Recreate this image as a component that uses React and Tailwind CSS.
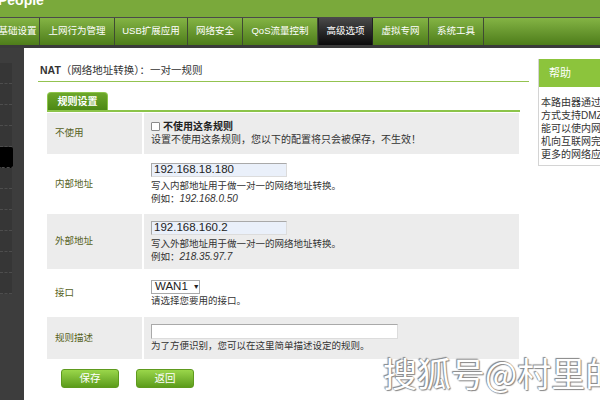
import React from "react";

const tabs = [
  { label: "基础设置", w: "w-[44px]" },
  { label: "上网行为管理", w: "w-[75px]" },
  { label: "USB扩展应用", w: "w-[73px]" },
  { label: "网络安全", w: "w-[55px]" },
  { label: "QoS流量控制", w: "w-[75px]" },
  { label: "高级选项", w: "w-[55px]", active: true },
  { label: "虚拟专网", w: "w-[56px]" },
  { label: "系统工具", w: "w-[55px]" },
];

const helpLines = [
  "本路由器通过一对一NAT",
  "方式支持DMZ主机，该功",
  "能可以使内网的一台主",
  "机向互联网完全暴露，",
  "更多的网络应用。",
];

const Row = ({ label, gray, h, children }) => (
  <div className={`flex ${h}`}>
    <div
      className={`w-[95px] shrink-0 flex items-center pl-[8px] text-[9.5px] text-[#56621c] ${
        gray ? "bg-[#ececec]" : "bg-white"
      }`}
    >
      {label}
    </div>
    <div className="w-[2px] shrink-0 bg-white" />
    <div
      className={`flex-1 flex flex-col justify-center pl-[7px] ${
        gray ? "bg-[#ececec]" : "bg-white"
      }`}
    >
      {children}
    </div>
  </div>
);

const TextBox = ({ value, w = "w-[136px]" }) => (
  <div
    className={`${w} h-[14px] bg-[#eaf0fa] border border-[#a9a9a9] border-r-[#dcdcdc] border-b-[#dcdcdc] flex items-center pl-[2px] text-[11.5px] leading-none text-[#222] font-['Liberation_Sans']`}
  >
    {value}
  </div>
);

const Hint = ({ children }) => (
  <div className="text-[9.5px] leading-[13px] text-[#333]">{children}</div>
);

const Example = ({ value }) => (
  <div className="text-[9.5px] leading-[13px] text-[#333]">
    例如：<span className="italic font-['Liberation_Sans'] text-[10px]">{value}</span>
  </div>
);

const GreenButton = ({ children }) => (
  <button className="w-[58px] h-[19px] rounded-[3px] border border-[#5e9a1e] bg-gradient-to-b from-[#9ad64a] to-[#5c9c1a] text-white text-[10.5px] leading-none">
    {children}
  </button>
);

export default function App() {
  return (
    <div className="relative w-[600px] h-[400px] overflow-hidden bg-white font-['Liberation_Sans','Noto_Sans_CJK_SC',sans-serif]">
      {/* header */}
      <div className="h-[17px] bg-[#7aa93b] relative overflow-hidden">
        <div className="absolute left-[-2px] top-[-10px] text-white text-[14px] font-bold">People</div>
      </div>

      {/* nav */}
      <div className="h-[28px] flex border-t border-[#4a4a4a] bg-gradient-to-b from-[#84b444] to-[#4e7d1a] -ml-[4px]">
        {tabs.map((t) => (
          <div
            key={t.label}
            className={`${t.w} shrink-0 flex items-center justify-center whitespace-nowrap text-[9.5px] text-white border-r border-[#3f4a33] ${
              t.active ? "bg-gradient-to-b from-[#4a4a4a] to-[#0c0c0c] border-l border-[#222]" : ""
            }`}
          >
            {t.label}
          </div>
        ))}
      </div>
      <div className="h-[3px] bg-[#3a3a3a]" />

      {/* body */}
      <div className="flex h-[352px]">
        <div className="w-[24px] shrink-0 bg-[#3d3d3d] pt-[15px]">
          {Array.from({ length: 11 }).map((_, i) => (
            <div
              key={i}
              className={`h-[21px] border-b border-dashed border-[#4d4d4d] ${
                i === 4 ? "bg-black w-[13px] rounded-r-[2px]" : "bg-[#363636] w-[12px]"
              }`}
            />
          ))}
        </div>

        <div className="flex-1 min-w-0 flex pl-[14px] gap-[9px]">
          <div className="w-[491px] shrink-0">
            <div className="pt-[14px] pb-[3px] pl-[2px] border-b border-[#93c350] text-[10.5px] text-[#333] leading-[16px]">
              <span className="font-bold">NAT</span>（网络地址转换）：一对一规则
            </div>

            <div className="ml-[9px] mt-[10px] w-[473px]">
              <div className="w-[61px] h-[18px] rounded-t-[4px] border border-b-0 border-[#8cc44a] bg-gradient-to-b from-[#6da72a] to-[#4c8814] flex items-center justify-center text-white text-[10px] font-bold">
                规则设置
              </div>
              <div className="h-[2px] bg-[#8cc44a] mb-[1px]" />

              <div className="w-[472px]">
                <Row label="不使用" gray h="h-[41px]">
                  <div className="flex items-center gap-[3px] text-[10px] leading-[13px] text-[#222]">
                    <span className="w-[9px] h-[9px] border border-[#8a8a8a] bg-white rounded-[1px]" />
                    <span className="font-bold">不使用这条规则</span>
                  </div>
                  <div className="text-[10px] leading-[14px] text-[#333]">
                    设置不使用这条规则，您以下的配置将只会被保存，不生效！
                  </div>
                </Row>
                <Row label="内部地址" h="h-[60px]">
                  <TextBox value="192.168.18.180" />
                  <div className="h-[2px]" />
                  <Hint>写入内部地址用于做一对一的网络地址转换。</Hint>
                  <Example value="192.168.0.50" />
                </Row>
                <Row label="外部地址" gray h="h-[55px]">
                  <TextBox value="192.168.160.2" />
                  <div className="h-[2px]" />
                  <Hint>写入外部地址用于做一对一的网络地址转换。</Hint>
                  <Example value="218.35.97.7" />
                </Row>
                <Row label="接口" h="h-[48px]">
                  <div className="w-[49px] h-[14px] border border-[#a9a9a9] bg-white flex items-center pl-[3px] gap-[5px] text-[11.5px] leading-none text-[#222]">
                    WAN1 <span className="text-[7px]">▼</span>
                  </div>
                  <Hint>请选择您要用的接口。</Hint>
                </Row>
                <Row label="规则描述" gray h="h-[42px]">
                  <TextBox value="" w="w-[247px] bg-white h-[15px]" />
                  <Hint>为了方便识别，您可以在这里简单描述设定的规则。</Hint>
                </Row>
              </div>

              <div className="flex gap-[17px] ml-[14px] mt-[10px]">
                <GreenButton>保存</GreenButton>
                <GreenButton>返回</GreenButton>
              </div>
            </div>
          </div>

          <div className="w-[90px] shrink-0 mt-[11px] h-[107px] border border-[#d4d4d4] border-t-0">
            <div className="h-[28px] bg-[#8cc43c] flex items-center pl-[10px] text-white text-[11px]">
              帮助
            </div>
            <div className="pt-[9px] pl-[2px] text-[10px] leading-[13px] text-[#333] whitespace-nowrap">
              {helpLines.map((l) => (
                <div key={l}>{l}</div>
              ))}
            </div>
          </div>
        </div>
      </div>

      {/* watermark */}
      <div className="absolute left-[383px] top-[353px] whitespace-nowrap text-[34px] leading-[40px] text-white font-['Noto_Sans_CJK_SC',sans-serif] [text-shadow:0_0_1px_#777,1px_1px_1px_#888,-1px_-1px_1px_#888]">
        搜狐号@村里的
      </div>
    </div>
  );
}
